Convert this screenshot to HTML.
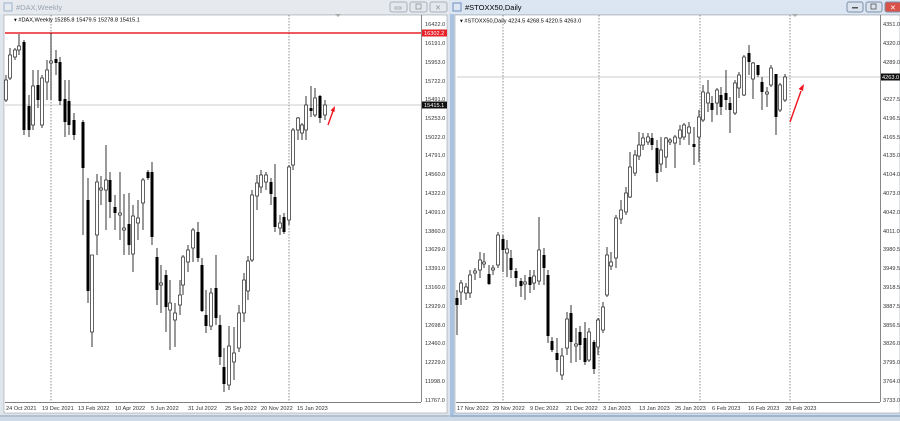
<!DOCTYPE html>
<html><head><style>
body{margin:0;width:900px;height:421px;overflow:hidden;background:#d9e3ee;font-family:"Liberation Sans",sans-serif}
svg{position:absolute;left:0;top:0}
text{font-family:"Liberation Sans",sans-serif}
</style></head><body>
<svg width="900" height="421" viewBox="0 0 900 421">
<!-- left window -->
<rect x="0" y="0" width="449" height="416" fill="#dfe5ec"/>
<rect x="0" y="0" width="449" height="14" fill="#e6eaef"/>
<rect x="4" y="3" width="8" height="8" fill="none" stroke="#9db3cc"/>
<text x="16" y="10" font-size="7.5" fill="#9aa3ad">#DAX,Weekly</text>
<g fill="#e4e8ed" stroke="#a8b0ba"><rect x="390" y="2" width="17" height="10" rx="2"/><rect x="410" y="2" width="17" height="10" rx="2"/><rect x="430" y="2" width="17" height="10" rx="2"/></g>
<rect x="395" y="7" width="6" height="2" fill="none" stroke="#8a929c" stroke-width=".6"/>
<rect x="416" y="4" width="5" height="5" fill="none" stroke="#8a929c" stroke-width=".8"/>
<text x="435" y="10" font-size="7" fill="#8a929c">✕</text>
<rect x="4" y="15" width="443" height="398" fill="#fff" stroke="#8a8f95" stroke-width=".5"/>
<line x1="421.5" y1="15" x2="421.5" y2="402" stroke="#555" stroke-width=".7"/>
<line x1="5" y1="402.5" x2="421" y2="402.5" stroke="#555" stroke-width=".7"/>
<g stroke="#444" stroke-width=".6" stroke-dasharray="1.5,1.5"><line x1="51" y1="15" x2="51" y2="402"/><line x1="289" y1="15" x2="289" y2="402"/></g>
<line x1="5" y1="105" x2="421" y2="105" stroke="#bbb" stroke-width=".7"/>
<line x1="5" y1="33" x2="421" y2="33" stroke="#e8202a" stroke-width="1.4"/>
<text x="14" y="21.5" font-size="5.6" fill="#000">▾  #DAX,Weekly  15285.8 15479.5 15278.8 15415.1</text>
<path d="M335 14l3 3 3-3z" fill="#aaa"/>
<g font-size="5.6" fill="#333">
<text x="425" y="26">16422.0</text><text x="425" y="45">16191.0</text><text x="425" y="64">15953.0</text><text x="425" y="83">15722.0</text><text x="425" y="101">15491.0</text><text x="425" y="120">15253.0</text><text x="425" y="139">15022.0</text><text x="425" y="157">14791.0</text><text x="425" y="176">14560.0</text><text x="425" y="195">14322.0</text><text x="425" y="214">14091.0</text><text x="425" y="233">13860.0</text><text x="425" y="251">13629.0</text><text x="425" y="270">13391.0</text><text x="425" y="289">13160.0</text><text x="425" y="308">12929.0</text><text x="425" y="327">12698.0</text><text x="425" y="345">12460.0</text><text x="425" y="364">12229.0</text><text x="425" y="383">11998.0</text><text x="425" y="402">11767.0</text>
</g>
<rect x="422" y="29.5" width="25" height="7" fill="#e8202a"/><text x="424" y="35" font-size="5.6" fill="#fff">16302.2</text>
<rect x="422" y="101.5" width="25" height="7" fill="#111"/><text x="424" y="107" font-size="5.6" fill="#fff">15415.1</text>
<g font-size="5.6" fill="#333">
<text x="6" y="410">24 Oct 2021</text><text x="42" y="410">19 Dec 2021</text><text x="78" y="410">13 Feb 2022</text><text x="115" y="410">10 Apr 2022</text><text x="151" y="410">5 Jun 2022</text><text x="188" y="410">31 Jul 2022</text><text x="225" y="410">25 Sep 2022</text><text x="261" y="410">20 Nov 2022</text><text x="297" y="410">15 Jan 2023</text>
</g>
<g stroke="#000" stroke-width=".8">
<line x1="6" y1="75" x2="6" y2="102"/><line x1="10" y1="48" x2="10" y2="80"/><line x1="15" y1="48" x2="15" y2="60"/><line x1="19" y1="34" x2="19" y2="55"/><line x1="24" y1="40" x2="24" y2="135"/><line x1="29" y1="95" x2="29" y2="137"/><line x1="33" y1="70" x2="33" y2="130"/><line x1="38" y1="70" x2="38" y2="108"/><line x1="42" y1="75" x2="42" y2="128"/><line x1="47" y1="60" x2="47" y2="100"/><line x1="51" y1="33" x2="51" y2="100"/><line x1="56" y1="50" x2="56" y2="75"/><line x1="60" y1="57" x2="60" y2="105"/><line x1="65" y1="80" x2="65" y2="137"/><line x1="69" y1="80" x2="69" y2="135"/><line x1="74" y1="113" x2="74" y2="140"/><line x1="83" y1="120" x2="83" y2="235"/><line x1="88" y1="178" x2="88" y2="303"/><line x1="92" y1="255" x2="92" y2="347"/><line x1="97" y1="174" x2="97" y2="255"/><line x1="101" y1="176" x2="101" y2="205"/><line x1="106" y1="145" x2="106" y2="230"/><line x1="110" y1="172" x2="110" y2="218"/><line x1="115" y1="195" x2="115" y2="230"/><line x1="120" y1="172" x2="120" y2="240"/><line x1="124" y1="194" x2="124" y2="255"/><line x1="129" y1="193" x2="129" y2="255"/><line x1="133" y1="205" x2="133" y2="272"/><line x1="138" y1="200" x2="138" y2="240"/><line x1="143" y1="178" x2="143" y2="230"/><line x1="148" y1="170" x2="148" y2="180"/><line x1="152" y1="162" x2="152" y2="245"/><line x1="157" y1="248" x2="157" y2="305"/><line x1="161" y1="265" x2="161" y2="313"/><line x1="166" y1="270" x2="166" y2="332"/><line x1="170" y1="280" x2="170" y2="350"/><line x1="175" y1="303" x2="175" y2="347"/><line x1="180" y1="280" x2="180" y2="315"/><line x1="183" y1="255" x2="183" y2="295"/><line x1="188" y1="245" x2="188" y2="272"/><line x1="193" y1="228" x2="193" y2="262"/><line x1="198" y1="222" x2="198" y2="262"/><line x1="202" y1="258" x2="202" y2="312"/><line x1="206" y1="290" x2="206" y2="333"/><line x1="211" y1="288" x2="211" y2="330"/><line x1="216" y1="255" x2="216" y2="325"/><line x1="220" y1="315" x2="220" y2="365"/><line x1="224" y1="348" x2="224" y2="392"/><line x1="229" y1="326" x2="229" y2="390"/><line x1="234" y1="327" x2="234" y2="380"/><line x1="239" y1="305" x2="239" y2="352"/><line x1="244" y1="273" x2="244" y2="322"/><line x1="248" y1="256" x2="248" y2="300"/><line x1="252" y1="190" x2="252" y2="262"/><line x1="257" y1="175" x2="257" y2="210"/><line x1="261" y1="170" x2="261" y2="193"/><line x1="266" y1="172" x2="266" y2="190"/><line x1="271" y1="178" x2="271" y2="205"/><line x1="275" y1="164" x2="275" y2="232"/><line x1="280" y1="215" x2="280" y2="235"/><line x1="284" y1="213" x2="284" y2="234"/><line x1="289" y1="165" x2="289" y2="225"/><line x1="293" y1="128" x2="293" y2="170"/><line x1="298" y1="117" x2="298" y2="140"/><line x1="302" y1="123" x2="302" y2="140"/><line x1="306" y1="96" x2="306" y2="140"/><line x1="311" y1="86" x2="311" y2="117"/><line x1="315" y1="88" x2="315" y2="117"/><line x1="320" y1="95" x2="320" y2="123"/><line x1="325" y1="100" x2="325" y2="120"/>
</g>
<g fill="#000">
<rect x="22.5" y="42" width="3" height="88"/><rect x="27.5" y="106" width="3" height="24"/><rect x="36.5" y="85" width="3" height="15"/><rect x="54.5" y="59" width="3" height="4"/><rect x="58.5" y="62" width="3" height="39"/><rect x="63.5" y="99" width="3" height="23"/><rect x="67.5" y="101" width="3" height="24"/><rect x="72.5" y="120" width="3" height="15"/><rect x="81.5" y="122" width="3" height="46"/><rect x="86.5" y="200" width="3" height="91"/><rect x="108.5" y="180" width="3" height="22"/><rect x="113.5" y="207" width="3" height="6"/><rect x="127.5" y="224" width="3" height="21"/><rect x="146.5" y="172" width="3" height="6"/><rect x="150.5" y="172" width="3" height="65"/><rect x="155.5" y="257" width="3" height="33"/><rect x="164.5" y="275" width="3" height="32"/><rect x="196.5" y="232" width="3" height="26"/><rect x="200.5" y="265" width="3" height="46"/><rect x="204.5" y="315" width="3" height="11"/><rect x="214.5" y="288" width="3" height="30"/><rect x="218.5" y="325" width="3" height="32"/><rect x="222.5" y="367" width="3" height="17"/><rect x="269.5" y="182" width="3" height="12"/><rect x="273.5" y="197" width="3" height="30"/><rect x="282.5" y="217" width="3" height="15"/><rect x="309.5" y="108" width="3" height="3"/><rect x="318.5" y="96" width="3" height="22"/>
</g>
<g fill="#fff" stroke="#222" stroke-width=".7">
<rect x="4.5" y="80" width="3" height="20"/><rect x="8.5" y="55" width="3" height="23"/><rect x="13.5" y="50" width="3" height="7"/><rect x="17.5" y="46" width="3" height="4"/><rect x="31.5" y="86" width="3" height="39"/><rect x="40.5" y="78" width="3" height="47"/><rect x="45.5" y="70" width="3" height="12"/><rect x="49.5" y="61" width="3" height="2"/><rect x="90.5" y="255" width="3" height="77"/><rect x="95.5" y="182" width="3" height="53"/><rect x="99.5" y="188" width="3" height="2"/><rect x="104.5" y="180" width="3" height="10"/><rect x="118.5" y="213" width="3" height="2"/><rect x="122.5" y="228" width="3" height="2"/><rect x="131.5" y="216" width="3" height="38"/><rect x="136.5" y="218" width="3" height="5"/><rect x="141.5" y="180" width="3" height="23"/><rect x="159.5" y="283" width="3" height="2"/><rect x="168.5" y="303" width="3" height="7"/><rect x="173.5" y="313" width="3" height="7"/><rect x="178.5" y="295" width="3" height="10"/><rect x="181.5" y="257" width="3" height="28"/><rect x="186.5" y="250" width="3" height="12"/><rect x="191.5" y="230" width="3" height="18"/><rect x="209.5" y="293" width="3" height="33"/><rect x="227.5" y="346" width="3" height="39"/><rect x="232.5" y="353" width="3" height="9"/><rect x="237.5" y="313" width="3" height="35"/><rect x="242.5" y="280" width="3" height="33"/><rect x="246.5" y="261" width="3" height="30"/><rect x="250.5" y="195" width="3" height="65"/><rect x="255.5" y="183" width="3" height="13"/><rect x="259.5" y="175" width="3" height="12"/><rect x="264.5" y="175" width="3" height="7"/><rect x="278.5" y="223" width="3" height="5"/><rect x="287.5" y="167" width="3" height="53"/><rect x="291.5" y="130" width="3" height="35"/><rect x="296.5" y="118" width="3" height="12"/><rect x="300.5" y="125" width="3" height="8"/><rect x="304.5" y="105" width="3" height="25"/><rect x="313.5" y="98" width="3" height="17"/><rect x="323.5" y="105" width="3" height="10"/>
</g>
<line x1="328" y1="125" x2="333" y2="111" stroke="#f0141e" stroke-width="1.4"/><path d="M335 106l-4.5 4.5 4 1.5z" fill="#f0141e"/>

<!-- right window -->
<rect x="450" y="0" width="450" height="421" fill="#cfdcec"/>
<rect x="450" y="0" width="450" height="14" fill="#dce6f2"/>
<rect x="453" y="3" width="8" height="8" fill="none" stroke="#6c8fbf"/>
<text x="465" y="10" font-size="7.5" fill="#000">#STOXX50,Daily</text>
<g stroke="#7d8fa8"><rect x="847" y="2" width="16" height="10" rx="2" fill="#dbe3ee"/><rect x="866" y="2" width="16" height="10" rx="2" fill="#dbe3ee"/><rect x="885" y="2" width="16" height="10" rx="2" fill="#d9524a"/></g>
<rect x="852" y="7" width="6" height="1.5" fill="#555"/><rect x="871" y="4" width="5" height="5" fill="none" stroke="#555" stroke-width=".8"/>
<text x="890" y="10" font-size="7" fill="#fff">✕</text>
<rect x="450" y="14" width="4" height="402" fill="#a8c2e0"/>
<rect x="455" y="15" width="445" height="398" fill="#fff" stroke="#8a8f95" stroke-width=".5"/>
<line x1="880.5" y1="15" x2="880.5" y2="402" stroke="#555" stroke-width=".7"/>
<line x1="456" y1="402.5" x2="880" y2="402.5" stroke="#555" stroke-width=".7"/>
<g stroke="#444" stroke-width=".6" stroke-dasharray="1.5,1.5"><line x1="503" y1="15" x2="503" y2="402"/><line x1="599" y1="15" x2="599" y2="402"/><line x1="700" y1="15" x2="700" y2="402"/><line x1="790" y1="15" x2="790" y2="402"/></g>
<line x1="457" y1="77" x2="880" y2="77" stroke="#bbb" stroke-width=".7"/>
<text x="460" y="22.5" font-size="5.6" fill="#000">▾  #STOXX50,Daily  4224.5 4268.5 4220.5 4263.0</text>
<path d="M792 14l3 3 3-3z" fill="#aaa"/>
<g font-size="5.6" fill="#333">
<text x="883" y="26">4351.0</text><text x="883" y="45">4320.0</text><text x="883" y="64">4289.0</text><text x="883" y="101">4227.5</text><text x="883" y="120">4196.5</text><text x="883" y="139">4165.5</text><text x="883" y="157">4135.0</text><text x="883" y="176">4104.0</text><text x="883" y="195">4073.0</text><text x="883" y="214">4042.0</text><text x="883" y="233">4011.0</text><text x="883" y="251">3980.5</text><text x="883" y="270">3949.5</text><text x="883" y="289">3918.5</text><text x="883" y="308">3887.5</text><text x="883" y="327">3856.5</text><text x="883" y="345">3826.0</text><text x="883" y="364">3795.0</text><text x="883" y="383">3764.0</text><text x="883" y="402">3733.0</text>
</g>
<rect x="881" y="73.5" width="19" height="7" fill="#111"/><text x="882" y="79" font-size="5.6" fill="#fff">4263.0</text>
<g font-size="5.6" fill="#333">
<text x="457" y="410">17 Nov 2022</text><text x="493" y="410">29 Nov 2022</text><text x="530" y="410">9 Dec 2022</text><text x="566" y="410">21 Dec 2022</text><text x="603" y="410">3 Jan 2023</text><text x="639" y="410">13 Jan 2023</text><text x="675" y="410">25 Jan 2023</text><text x="712" y="410">6 Feb 2023</text><text x="748" y="410">16 Feb 2023</text><text x="785" y="410">28 Feb 2023</text>
</g>
<g stroke="#000" stroke-width=".8">
<line x1="457" y1="290" x2="457" y2="335"/><line x1="461" y1="280" x2="461" y2="305"/><line x1="466" y1="283" x2="466" y2="300"/><line x1="470" y1="270" x2="470" y2="298"/><line x1="475" y1="268" x2="475" y2="280"/><line x1="480" y1="252" x2="480" y2="278"/><line x1="484" y1="253" x2="484" y2="268"/><line x1="489" y1="265" x2="489" y2="285"/><line x1="493" y1="265" x2="493" y2="275"/><line x1="498" y1="232" x2="498" y2="268"/><line x1="503" y1="235" x2="503" y2="272"/><line x1="507" y1="240" x2="507" y2="277"/><line x1="511" y1="250" x2="511" y2="278"/><line x1="516" y1="268" x2="516" y2="287"/><line x1="521" y1="278" x2="521" y2="297"/><line x1="525" y1="275" x2="525" y2="300"/><line x1="530" y1="270" x2="530" y2="293"/><line x1="534" y1="270" x2="534" y2="290"/><line x1="539" y1="217" x2="539" y2="285"/><line x1="544" y1="248" x2="544" y2="285"/><line x1="548" y1="270" x2="548" y2="343"/><line x1="552" y1="337" x2="552" y2="352"/><line x1="557" y1="338" x2="557" y2="372"/><line x1="562" y1="348" x2="562" y2="380"/><line x1="567" y1="312" x2="567" y2="355"/><line x1="571" y1="305" x2="571" y2="363"/><line x1="576" y1="328" x2="576" y2="362"/><line x1="580" y1="326" x2="580" y2="360"/><line x1="585" y1="322" x2="585" y2="365"/><line x1="589" y1="328" x2="589" y2="362"/><line x1="594" y1="340" x2="594" y2="374"/><line x1="598" y1="318" x2="598" y2="355"/><line x1="603" y1="302" x2="603" y2="333"/><line x1="607" y1="247" x2="607" y2="297"/><line x1="611" y1="252" x2="611" y2="270"/><line x1="616" y1="215" x2="616" y2="268"/><line x1="621" y1="200" x2="621" y2="224"/><line x1="626" y1="187" x2="626" y2="215"/><line x1="630" y1="152" x2="630" y2="198"/><line x1="635" y1="150" x2="635" y2="176"/><line x1="639" y1="132" x2="639" y2="160"/><line x1="643" y1="133" x2="643" y2="150"/><line x1="648" y1="133" x2="648" y2="145"/><line x1="652" y1="133" x2="652" y2="150"/><line x1="657" y1="140" x2="657" y2="182"/><line x1="661" y1="137" x2="661" y2="172"/><line x1="666" y1="137" x2="666" y2="168"/><line x1="670" y1="138" x2="670" y2="145"/><line x1="675" y1="135" x2="675" y2="168"/><line x1="680" y1="125" x2="680" y2="145"/><line x1="684" y1="123" x2="684" y2="140"/><line x1="689" y1="122" x2="689" y2="145"/><line x1="694" y1="127" x2="694" y2="165"/><line x1="699" y1="110" x2="699" y2="162"/><line x1="703" y1="85" x2="703" y2="122"/><line x1="708" y1="80" x2="708" y2="112"/><line x1="712" y1="96" x2="712" y2="122"/><line x1="717" y1="88" x2="717" y2="115"/><line x1="721" y1="87" x2="721" y2="115"/><line x1="726" y1="70" x2="726" y2="110"/><line x1="730" y1="97" x2="730" y2="133"/><line x1="735" y1="80" x2="735" y2="115"/><line x1="739" y1="72" x2="739" y2="98"/><line x1="744" y1="55" x2="744" y2="96"/><line x1="749" y1="45" x2="749" y2="75"/><line x1="753" y1="62" x2="753" y2="99"/><line x1="758" y1="65" x2="758" y2="77"/><line x1="762" y1="77" x2="762" y2="110"/><line x1="767" y1="87" x2="767" y2="107"/><line x1="771" y1="65" x2="771" y2="87"/><line x1="776" y1="74" x2="776" y2="135"/><line x1="780" y1="83" x2="780" y2="112"/><line x1="785" y1="74" x2="785" y2="102"/>
</g>
<g fill="#000">
<rect x="455.5" y="298" width="3" height="7"/><rect x="487.5" y="274" width="3" height="10"/><rect x="501.5" y="239" width="3" height="11"/><rect x="509.5" y="258" width="3" height="12"/><rect x="514.5" y="271" width="3" height="7"/><rect x="519.5" y="281" width="3" height="5"/><rect x="528.5" y="277" width="3" height="8"/><rect x="542.5" y="255" width="3" height="13"/><rect x="546.5" y="275" width="3" height="61"/><rect x="550.5" y="341" width="3" height="9"/><rect x="555.5" y="353" width="3" height="7"/><rect x="569.5" y="313" width="3" height="29"/><rect x="578.5" y="332" width="3" height="13"/><rect x="583.5" y="338" width="3" height="24"/><rect x="592.5" y="342" width="3" height="27"/><rect x="650.5" y="138" width="3" height="7"/><rect x="655.5" y="148" width="3" height="25"/><rect x="692.5" y="144" width="3" height="3"/><rect x="710.5" y="103" width="3" height="7"/><rect x="719.5" y="95" width="3" height="12"/><rect x="724.5" y="93" width="3" height="7"/><rect x="728.5" y="103" width="3" height="7"/><rect x="747.5" y="53" width="3" height="9"/><rect x="756.5" y="65" width="3" height="10"/><rect x="760.5" y="82" width="3" height="10"/><rect x="774.5" y="74" width="3" height="43"/>
</g>
<g fill="#fff" stroke="#222" stroke-width=".7">
<rect x="459.5" y="283" width="3" height="9"/><rect x="464.5" y="287" width="3" height="6"/><rect x="468.5" y="275" width="3" height="18"/><rect x="473.5" y="271" width="3" height="2"/><rect x="478.5" y="260" width="3" height="10"/><rect x="482.5" y="262" width="3" height="2"/><rect x="491.5" y="268" width="3" height="2"/><rect x="496.5" y="235" width="3" height="30"/><rect x="505.5" y="249" width="3" height="4"/><rect x="523.5" y="282" width="3" height="2"/><rect x="532.5" y="276" width="3" height="7"/><rect x="537.5" y="250" width="3" height="31"/><rect x="560.5" y="356" width="3" height="19"/><rect x="565.5" y="319" width="3" height="29"/><rect x="574.5" y="344" width="3" height="2"/><rect x="587.5" y="332" width="3" height="28"/><rect x="596.5" y="320" width="3" height="27"/><rect x="601.5" y="307" width="3" height="23"/><rect x="605.5" y="255" width="3" height="40"/><rect x="609.5" y="262" width="3" height="4"/><rect x="614.5" y="218" width="3" height="40"/><rect x="619.5" y="210" width="3" height="9"/><rect x="624.5" y="193" width="3" height="19"/><rect x="628.5" y="167" width="3" height="30"/><rect x="633.5" y="155" width="3" height="18"/><rect x="637.5" y="145" width="3" height="11"/><rect x="641.5" y="138" width="3" height="7"/><rect x="646.5" y="137" width="3" height="5"/><rect x="659.5" y="150" width="3" height="14"/><rect x="664.5" y="138" width="3" height="19"/><rect x="668.5" y="140" width="3" height="2"/><rect x="673.5" y="137" width="3" height="6"/><rect x="678.5" y="130" width="3" height="8"/><rect x="682.5" y="125" width="3" height="12"/><rect x="687.5" y="127" width="3" height="6"/><rect x="697.5" y="117" width="3" height="20"/><rect x="701.5" y="92" width="3" height="28"/><rect x="706.5" y="93" width="3" height="10"/><rect x="715.5" y="90" width="3" height="13"/><rect x="733.5" y="83" width="3" height="30"/><rect x="737.5" y="75" width="3" height="13"/><rect x="742.5" y="57" width="3" height="38"/><rect x="751.5" y="63" width="3" height="16"/><rect x="765.5" y="92" width="3" height="2"/><rect x="769.5" y="68" width="3" height="17"/><rect x="778.5" y="85" width="3" height="25"/><rect x="783.5" y="77" width="3" height="23"/>
</g>
<line x1="790" y1="122" x2="801" y2="91" stroke="#f0141e" stroke-width="1.4"/><path d="M804 84l-5.5 5 4.5 2z" fill="#f0141e"/>
<rect x="0" y="415" width="900" height="6" fill="#cdd9e6"/>
<line x1="0" y1="416" x2="449" y2="416" stroke="#9aa6b4"/>
<line x1="450" y1="416" x2="900" y2="416" stroke="#6f8fb8"/>
</svg>
</body></html>
